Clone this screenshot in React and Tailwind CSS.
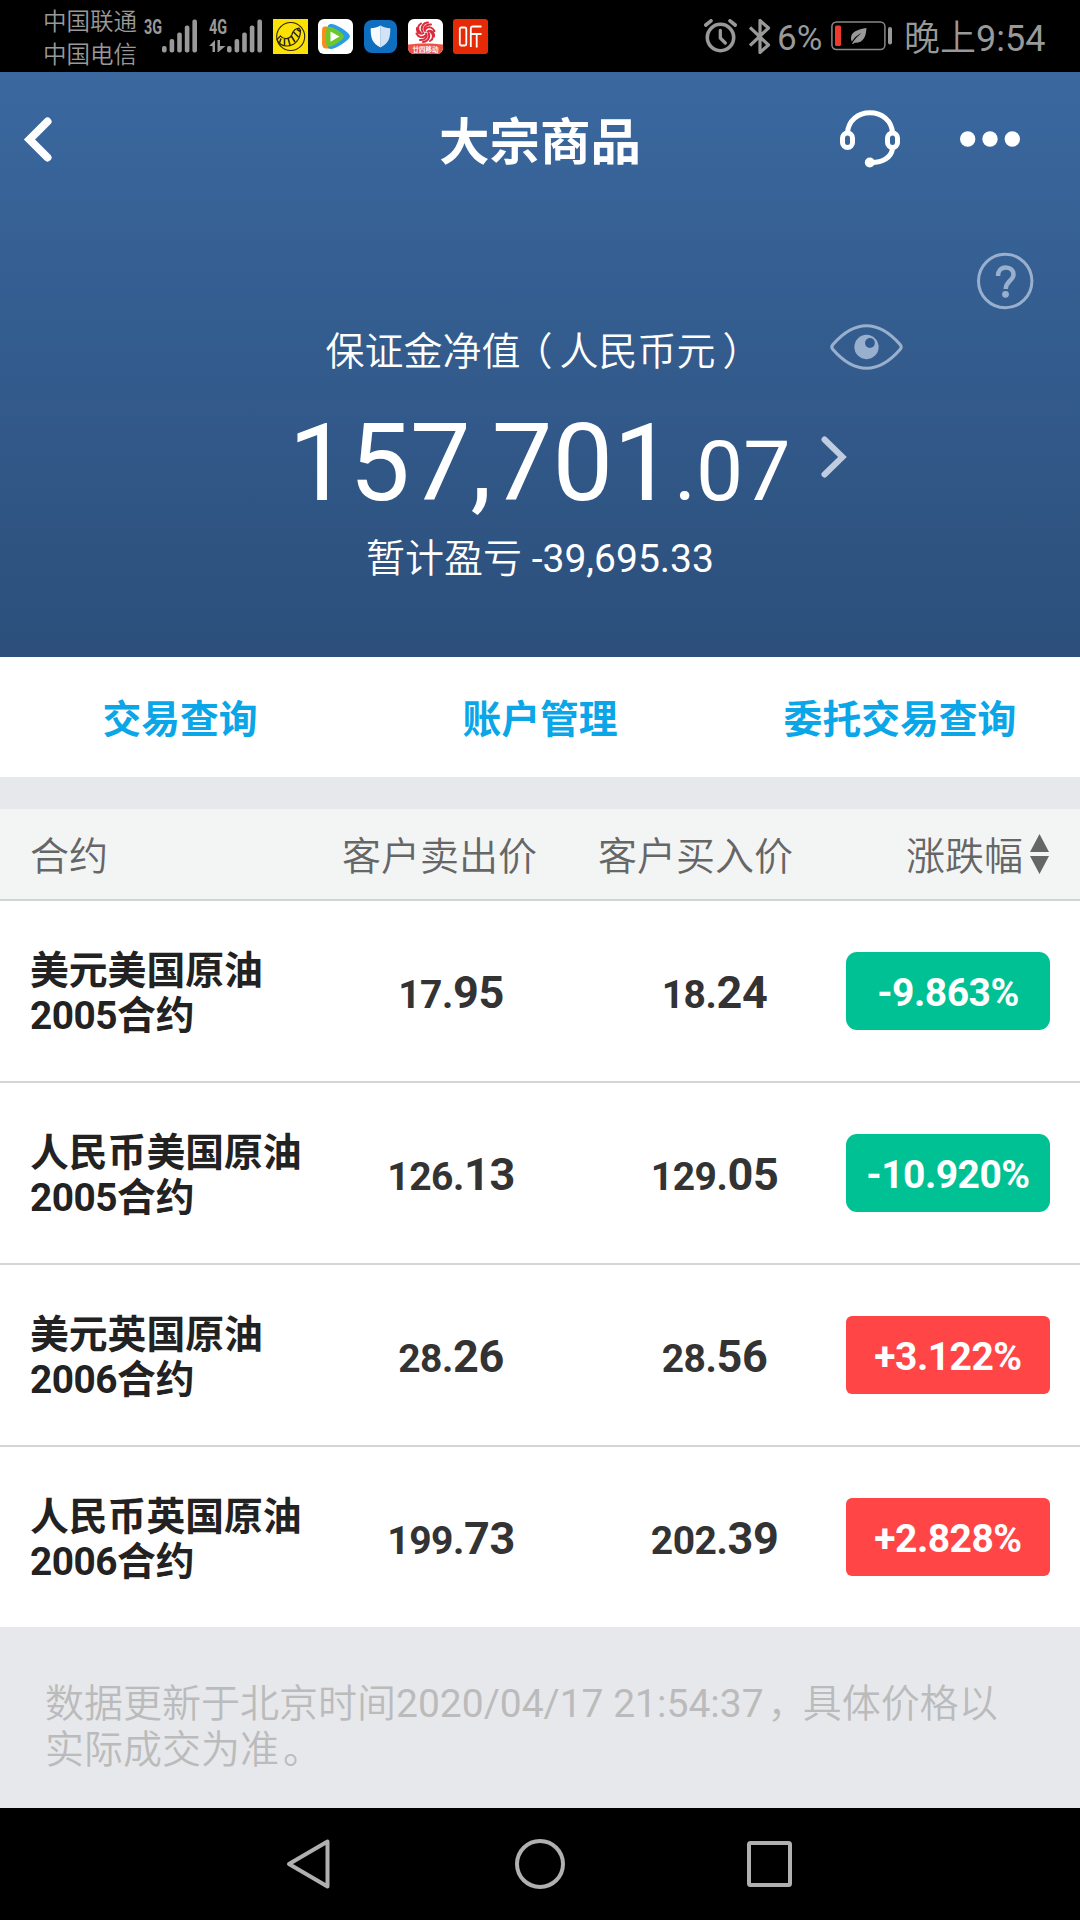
import React from 'react';

const tabs = ['交易查询', '账户管理', '委托交易查询'];

const contracts = [
  { currency: '美元美国原油', term: '2005', sell: ['17.', '95'], buy: ['18.', '24'], change: '-9.863%' },
  { currency: '人民币美国原油', term: '2005', sell: ['126.', '13'], buy: ['129.', '05'], change: '-10.920%' },
  { currency: '美元英国原油', term: '2006', sell: ['28.', '26'], buy: ['28.', '56'], change: '+3.122%' },
  { currency: '人民币英国原油', term: '2006', sell: ['199.', '73'], buy: ['202.', '39'], change: '+2.828%' },
];

const SignalBars = () => (
  <svg width="36" height="34" viewBox="0 0 36 34" fill="#999">
    <rect x="0" y="27" width="4.6" height="6.5" rx="2" />
    <rect x="7.6" y="20" width="4.6" height="13.5" rx="2" />
    <rect x="15.2" y="13.5" width="4.6" height="20" rx="2" />
    <rect x="22.8" y="6.5" width="4.6" height="27" rx="2" />
    <rect x="30.4" y="0.5" width="4.6" height="33" rx="2" />
  </svg>
);

const BananaIcon = () => (
  <svg width="35" height="35" viewBox="0 0 35 35" fill="none" stroke="#2a2410">
    <rect width="35" height="35" fill="#fbe104" stroke="none" />
    <circle cx="17.7" cy="17.5" r="14" strokeWidth="1.1" />
    <path d="M4 20.5l3.5-3.5c3 4 9.5 3.5 11.5-1.5 1-3.5 4-6 7-6.3l1.5 2c0 9-5.5 15.8-13.5 15.8C9 27 5.5 24.5 4 20.5z" strokeWidth="1.2" />
    <path d="M8 19.5l-1.5 4.5M11.5 20l0 6M15 19l2 7M18 16.5l4 6.5M20.5 13l5 5M24 10.5l3.5 2" strokeWidth="1.5" />
  </svg>
);

const VideoIcon = () => (
  <svg width="35" height="35" viewBox="0 0 35 35">
    <rect width="35" height="35" rx="6" fill="#fff" />
    <path d="M6 7.5h6v22H8c-2.500 0-4-2-4-5v-12c0-3 .5-4.5 2-5z" fill="#fb8c1c" />
    <path d="M10 6.5c1-2 4-2 7-.8 5 2 9 4.8 13 8.3 2.5 2.2 2.5 4.3 0 6.5-4 3.5-8 6.5-13 8.5-3.5 1.300-6 1.300-7-.5z" fill="#2b9be8" />
    <path d="M8.5 9.5c.5-2 3-2.300 5.500-1.200 4.500 2 7.500 4 10.500 6.700 1.800 1.600 1.800 3.400 0 5-3 2.800-6 5-10.500 7-2.500 1-5 1-5.500-1-.8-5-.8-11.500 0-16.500z" fill="#6bc72a" />
    <path d="M12.5 12.5l9 5-9 5.200z" fill="#fff" />
  </svg>
);

const ShieldIcon = () => (
  <svg className="mx-px mt-px" width="33" height="33" viewBox="0 0 33 33">
    <rect width="33" height="33" rx="8" fill="#0e6fc0" />
    <path d="M16.5 5.5c3.500 2 6 2.600 9.800 2.800 0 9.500-1.300 15.200-9.800 19.200z" fill="#d3e3f3" />
    <path d="M16.5 5.5c-3.500 2-6 2.600-9.800 2.800 0 9.500 1.300 15.200 9.800 19.200z" fill="#f7fafd" />
  </svg>
);

const NewsIcon = () => (
  <svg width="35" height="35" viewBox="0 0 35 35">
    <rect width="35" height="35" rx="6" fill="#fff" />
    <path d="M0 25.5c10-1.500 25-1.500 35 0V29a6 6 0 0 1-6 6H6a6 6 0 0 1-6-6z" fill="#ee5145" />
    <g fill="none" stroke="#dc2b3c" strokeWidth="2" strokeLinecap="round">
      <path d="M17 12c-2-3 1-7 6-6.500M14.500 12.500C12 8 16 3.500 20 3.600M12.500 14C9 10.500 9.500 6.500 13 4.500" />
      <path d="M18 14.500c2 3-1 7-6 6.500M20.500 14c2.500 4.500-1.500 9-5.500 8.900M22.500 12.500c3.500 3.500 3 7.500-.5 9.500" />
      <path d="M15.500 14c-3 2-7-.5-6.500-5M19.500 12.500c3-2 7 .5 6.500 5M17.500 16.500c-3 3-7 2-9-2M17.500 10c3-3 7-2 9 2" />
    </g>
    <text x="17.5" y="33" textAnchor="middle" fontSize="6.5" fontWeight="700" fill="#fff">廿四移动</text>
  </svg>
);

const ListenIcon = () => (
  <svg width="35" height="35" viewBox="0 0 35 35" fill="none" stroke="#fff" strokeWidth="1.8">
    <rect width="35" height="35" rx="3" fill="#e52a05" stroke="none" />
    <rect x="6.8" y="8.5" width="6.5" height="18" rx="1.5" />
    <path d="M28.5 7.5H20c-1.500 0-2.200.7-2.200 2.200V28M17.800 15h10.700M23.700 15v13.500" />
  </svg>
);

const StatusBar = () => (
  <div className="flex h-[72px] items-start bg-black pl-[43px] text-[#999]">
    <div className="w-[101px] pt-[6px] text-[23.5px] leading-[32.5px]">
      <p>中国联通</p>
      <p>中国电信</p>
    </div>
    <div className="flex w-[65px] pt-[19px]">
      <span className="w-[18px] origin-left scale-x-[0.72] text-[20px] leading-[16px] font-bold">3G</span>
      <SignalBars />
    </div>
    <div className="flex w-[64px] pt-[19px]">
      <div className="w-[18px]">
        <p className="w-[18px] origin-left scale-x-[0.72] text-[20px] leading-[16px] font-bold">4G</p>
        <svg className="mt-[5px]" width="17" height="12" viewBox="0 0 17 12" fill="#999">
          <path d="M0 6l6-6v12H3.500V6zM8.500 0H11v6h5.500L9.500 12h-1z" />
        </svg>
      </div>
      <SignalBars />
    </div>
    <div className="flex h-[54px] w-[431px] items-start gap-[10px] pt-[19px]">
      <BananaIcon />
      <VideoIcon />
      <ShieldIcon />
      <NewsIcon />
      <ListenIcon />
    </div>
    <div className="flex h-[72px] items-center">
      <svg width="34" height="34" viewBox="0 0 34 34" fill="none" stroke="#999">
        <circle cx="16.5" cy="18.5" r="13.2" strokeWidth="3.6" />
        <path d="M1.8 6L7 1.800M31.200 6L26 1.800" strokeWidth="3.6" strokeLinecap="round" />
        <path d="M16.3 11.500v7.500l5 5" strokeWidth="3.3" strokeLinecap="round" strokeLinejoin="round" />
      </svg>
      <svg className="ml-[11px]" width="22" height="35" viewBox="0 0 22 35" fill="none" stroke="#999" strokeWidth="3.2">
        <path d="M1 8.500l18.500 17.500-8.500 7.500v-32l8.500 7.500L1 26.500" strokeLinejoin="round" />
      </svg>
      <span className="mt-[6px] ml-[6px] w-[54px] text-[35px] leading-[44px]">6%</span>
      <svg width="62" height="30" viewBox="0 0 62 30" fill="none">
        <rect x="0.9" y="1" width="53" height="27.5" rx="4.5" stroke="#888" strokeWidth="1.5" />
        <rect x="4" y="4.5" width="6" height="20.5" rx="1.5" fill="#ee3a2a" />
        <path d="M35.5 7c-9 1.500-15.500 4-15.500 10 0 1.500.3 2.500 1 3.500 3-4.500 5.500-6.500 9.500-8.500-3.500 2.800-6.500 6-9.500 10.500l1 .5c1-.7 1.500-1.200 2.500-1.200 8 0 10.500-6.300 11-14.800z" fill="#999" />
        <rect x="57" y="6" width="4" height="17.5" rx="2" fill="#999" />
      </svg>
      <span className="mt-[6px] ml-[11px] text-[36px] leading-[44px] whitespace-nowrap">晚上9:54</span>
    </div>
  </div>
);

const TitleBar = () => (
  <div className="grid h-[140px] grid-cols-[240px_1fr_240px] items-center">
    <svg className="mb-[4px] ml-[22px]" width="32" height="48" viewBox="0 0 32 48" fill="none" stroke="#fff" strokeWidth="8" strokeLinecap="round">
      <path d="M25.5 5.5L7.5 23.5l18 18" />
    </svg>
    <h1 className="pt-[2px] text-center font-[Roboto,'Noto_Sans_CJK_SC',sans-serif] text-[50.5px] leading-[60px] font-bold">大宗商品</h1>
    <div className="flex items-center pb-[5px]">
      <svg width="60" height="60" viewBox="0 0 60 60" fill="none" stroke="#fff" strokeWidth="5">
        <path d="M7.5 22.5C8.5 10.5 18 2.8 30 2.8S51.5 10.5 52.5 22.5" />
        <rect x="2.5" y="23" width="10" height="14.5" rx="5" />
        <rect x="47.5" y="23" width="10" height="14.5" rx="5" />
        <path d="M52.5 39c-1.500 8.500-9.500 13.500-21 13.500" />
        <circle cx="29.8" cy="52.5" r="5" fill="#fff" stroke="none" />
      </svg>
      <svg className="mb-px ml-[60px]" width="60" height="16" viewBox="0 0 60 16" fill="#fff">
        <circle cx="7.7" cy="8" r="7.7" />
        <circle cx="30" cy="8" r="7.7" />
        <circle cx="52.3" cy="8" r="7.7" />
      </svg>
    </div>
  </div>
);

const AccountSummary = () => (
  <div>
    <div className="flex h-[98px] justify-end pt-[40px] pr-[46px]">
      <svg width="58" height="58" viewBox="0 0 58 58" fill="none" stroke="#99afce">
        <circle cx="29.2" cy="29" r="26.7" strokeWidth="3" />
        <path d="M22 24c0-5.500 3-8.500 7.700-8.500 4.800 0 7.800 2.800 7.800 7 0 6-7.800 6.500-7.800 14.500" strokeWidth="4.5" />
        <circle cx="29.5" cy="42.3" r="3.4" fill="#99afce" stroke="none" />
      </svg>
    </div>
    <div className="grid h-[83px] grid-cols-[1fr_auto_1fr] items-center">
      {/* half-width brackets padded out so they sit centred in their cells */}
      <p className="col-start-2 text-[39px] leading-[46px]">
        保证金净值<span className="pr-[7px] pl-[12.5px] [font-feature-settings:'halt']">（</span>人民币元<span className="pr-[12.5px] pl-[7px] [font-feature-settings:'halt']">）</span>
      </p>
      <svg className="mb-[10px] ml-[75px]" width="73" height="48" viewBox="0 0 74 48" fill="none" stroke="#99afce">
        <path d="M3 21.5C13 10 25 2.5 37 2.5S61 10 71 21.5c1.500 1.700 1.500 3.300 0 5C61 38 49 45.500 37 45.500S13 38 3 26.500c-1.500-1.700-1.500-3.300 0-5z" strokeWidth="3.2" />
        <circle cx="37" cy="24" r="12.3" fill="#99afce" stroke="none" />
        <circle cx="40.5" cy="20" r="5" fill="#315b8e" stroke="none" />
      </svg>
    </div>
    <div className="grid h-[140px] grid-cols-[1fr_auto_1fr] items-center">
      <p className="col-start-2 -ml-px pt-[8px] text-[108px] leading-[120px]">157,701<span className="text-[84px]">.07</span></p>
      <svg className="mb-[12px] ml-[30px]" width="26" height="42" viewBox="0 0 26 42" fill="none" stroke="#c0cde0" strokeWidth="6" strokeLinecap="round">
        <path d="M3.5 3.5L21.5 21l-18 17.500" />
      </svg>
    </div>
    <p className="pt-px text-center text-[39px] leading-[51px]">暂计盈亏 -39,695.33</p>
  </div>
);

const Price = ({ value }) => (
  <p className="pt-[5px] text-center text-[39px] leading-[46px] font-bold tracking-[-0.4px] text-[#333]">
    {value[0]}<span className="text-[45px]">{value[1]}</span>
  </p>
);

const ChangeBadge = ({ change }) => {
  const color = change.startsWith('-') ? 'bg-[#00c193] rounded-[11px]' : 'bg-[#ff4545] rounded-[6px]';
  return (
    <div className={`flex h-[78px] items-center justify-center pt-[4px] text-[39px] leading-[46px] font-bold tracking-[-0.5px] text-white ${color}`}>
      {change}
    </div>
  );
};

const ContractTable = () => (
  <div className="bg-white">
    <div className="grid h-[92px] grid-cols-[312px_256px_308px_1fr] items-center border-b-2 border-[#d2d5d6] bg-[#f3f5f5] pt-[6px] pl-[30px] text-[39px] leading-[46px] text-[#666]">
      <span>合约</span>
      <span>客户卖出价</span>
      <span>客户买入价</span>
      <span className="flex items-center gap-[7px]">
        涨跌幅
        <svg className="mb-[6px]" width="19" height="40" viewBox="0 0 19 40" fill="#666">
          <path d="M9.5 0L19 18H0zM0 22h19L9.500 40z" />
        </svg>
      </span>
    </div>
    <div className="divide-y-2 divide-[#d2d5d6]">
      {contracts.map((item) => (
        <div key={item.currency} className="grid h-[182px] grid-cols-[289px_264px_263px_204px] items-center pl-[30px] last:h-[180px]">
          <div className="pt-[4px] font-[Roboto,'Noto_Sans_CJK_SC',sans-serif] text-[38.8px] leading-[45.5px] font-bold whitespace-nowrap text-[#222]">
            <p>{item.currency}</p>
            <p><span className="tracking-[-0.5px]">{item.term}</span>合约</p>
          </div>
          <Price value={item.sell} />
          <Price value={item.buy} />
          <ChangeBadge change={item.change} />
        </div>
      ))}
    </div>
  </div>
);

const NavBar = () => (
  <div className="flex h-[112px] items-center justify-center bg-black pr-[2px]">
    <svg className="mr-[183px]" width="46" height="52" viewBox="0 0 46 52" fill="none" stroke="#b0b0b0" strokeWidth="4" strokeLinejoin="round">
      <path d="M42.5 3.5v45L4 26z" />
    </svg>
    <svg width="52" height="52" viewBox="0 0 52 52" fill="none" stroke="#b0b0b0" strokeWidth="4">
      <circle cx="26" cy="26" r="23" />
    </svg>
    <svg className="ml-[180px]" width="48" height="48" viewBox="0 0 48 48" fill="none" stroke="#b0b0b0" strokeWidth="4">
      <rect x="3" y="3" width="41" height="42" rx="1.5" />
    </svg>
  </div>
);

const App = () => {
  return (
    <div className="flex h-[1920px] w-[1080px] flex-col overflow-hidden bg-[#e7e8ec] font-[Roboto,'Noto_Sans_CJK_SC_DemiLight','Noto_Sans_CJK_SC',sans-serif]">
      <StatusBar />
      <div className="h-[585px] bg-linear-to-b from-[#3a689f] to-[#2c4f7b] text-white">
        <TitleBar />
        <AccountSummary />
      </div>
      <div className="mb-[32px] grid h-[120px] grid-cols-3 items-center bg-white pt-[6px] text-center font-[Roboto,'Noto_Sans_CJK_SC',sans-serif] text-[38.8px] leading-[46px] font-bold text-[#0aa6e8]">
        {tabs.map((tab) => (
          <span key={tab}>{tab}</span>
        ))}
      </div>
      <ContractTable />
      <p className="flex-1 pt-[54px] pr-[60px] pl-[45px] text-[39px] leading-[46px] text-[#bbb]">
        数据更新于北京时间2020/04/17 21:54:37<span className="pr-[15.5px] pl-[4px] [font-feature-settings:'halt']">，</span>具体价格以
        <br />
        实际成交为准<span className="pl-[4px] [font-feature-settings:'halt']">。</span>
      </p>
      <NavBar />
    </div>
  );
};

export default App;
